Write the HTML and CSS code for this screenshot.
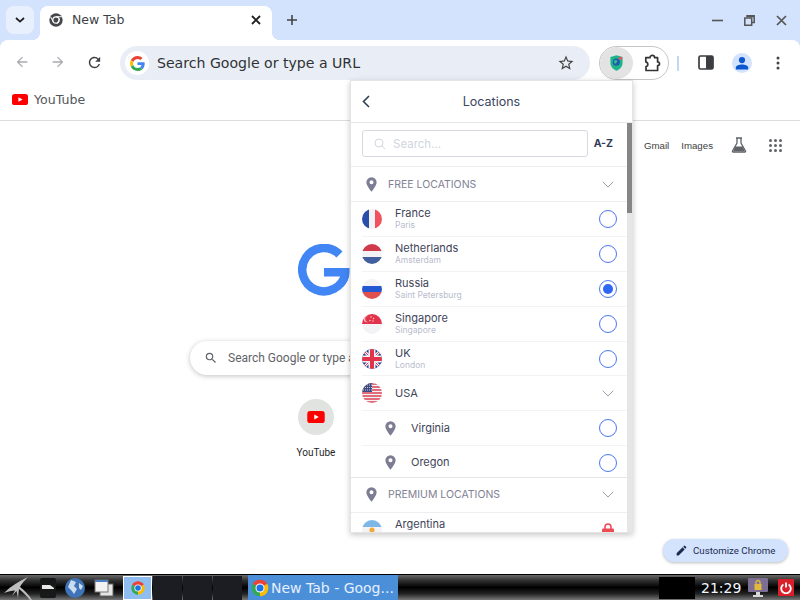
FILE: index.html
```html
<!DOCTYPE html>
<html lang="en">
<head>
  <meta charset="UTF-8" />
  <title>New Tab</title>
  <link rel="stylesheet" href="styles.css">
</head>
<body>
  <svg class="defs" xmlns="http://www.w3.org/2000/svg">
    <symbol id="chrome" viewBox="0 0 24 24">
      <path fill="#ea4335" d="M12 12 3.34 7A10 10 0 0 1 20.66 7Z"/>
      <path fill="#fbbc05" d="M12 12 20.66 7A10 10 0 0 1 12 22Z"/>
      <path fill="#34a853" d="M12 12 12 22A10 10 0 0 1 3.34 7Z"/>
      <circle cx="12" cy="12" r="5.4" fill="#fff"/>
      <circle cx="12" cy="12" r="4.2" fill="#1a73e8"/>
    </symbol>
    <symbol id="pin" viewBox="0 0 12 16">
      <path fill="#7c7c94" fill-rule="evenodd" d="M6 0a5.6 5.6 0 0 1 5.6 5.6C11.6 9.4 6 16 6 16S.4 9.4.4 5.6A5.6 5.6 0 0 1 6 0Zm0 3.4a2.2 2.2 0 1 0 0 4.4 2.2 2.2 0 0 0 0-4.4Z"/>
    </symbol>
    <symbol id="chev" viewBox="0 0 12 7">
      <path fill="none" stroke="#9a9cae" stroke-width="1" d="M.7.8 6 6 11.3.8"/>
    </symbol>
    <symbol id="yt" viewBox="0 0 16 11">
      <rect width="16" height="11" rx="2.6" fill="#f00"/>
      <path fill="#fff" d="M6.4 3.2 10.6 5.5 6.4 7.8Z"/>
    </symbol>
  </svg>

  <div class="tabstrip">
    <div class="tab-search">
      <svg width="10" height="6" viewBox="0 0 10 6"><path fill="none" stroke="#1f1f1f" stroke-width="1.8" d="M1 1l4 3.6L9 1"/></svg>
    </div>
    <div class="tab">
      <svg width="14" height="14" viewBox="0 0 24 24"><circle cx="12" cy="12" r="11.5" fill="#45474a"/><circle cx="12" cy="12" r="6.4" fill="#fff"/><circle cx="12" cy="12" r="4.4" fill="#45474a"/><path d="M12 5.6h10v1.5H12zM6.6 15.2 2 7l1.3-.8 4.6 8zM13 18l4.8-8.4 1.3.8L14.3 18.8z" fill="#fff"/></svg>
      <span class="tab-title">New Tab</span>
      <svg class="tab-x" width="10" height="10" viewBox="0 0 10 10"><path stroke="#1f1f1f" stroke-width="1.8" d="M1 1l8 8M9 1l-8 8"/></svg>
    </div>
    <svg class="new-tab" width="12" height="12" viewBox="0 0 12 12"><path stroke="#444" stroke-width="1.6" d="M6 1v10M1 6h10"/></svg>
    <div class="win-btns">
      <svg width="11" height="3" viewBox="0 0 11 3"><path stroke="#555" stroke-width="1.6" d="M0 1.5h11"/></svg>
      <svg width="11" height="11" viewBox="0 0 11 11"><path fill="none" stroke="#555" stroke-width="1.5" d="M3 2V.8h7.2v6.7H8M.8 3h6.9v7.2H.8z"/><path stroke="#555" stroke-width="1.5" d="M3 1.5h7"/></svg>
      <svg width="11" height="11" viewBox="0 0 11 11"><path stroke="#555" stroke-width="1.7" d="M1 1l9 9M10 1l-9 9"/></svg>
    </div>
  </div>

  <div class="toolbar">
    <svg class="nav" width="16" height="16" viewBox="0 0 24 24"><path fill="#a9abae" d="M20 11H7.83l5.59-5.59L12 4l-8 8 8 8 1.41-1.41L7.83 13H20v-2z"/></svg>
    <svg class="nav" width="16" height="16" viewBox="0 0 24 24"><path fill="#a9abae" d="M4 11h12.17l-5.59-5.59L12 4l8 8-8 8-1.41-1.41L16.17 13H4v-2z"/></svg>
    <svg class="nav" width="17" height="17" viewBox="0 0 24 24"><path fill="#3c3f43" d="M17.65 6.35A7.958 7.958 0 0 0 12 4c-4.42 0-7.99 3.58-7.99 8s3.57 8 7.99 8c3.73 0 6.84-2.55 7.73-6h-2.08A5.99 5.99 0 0 1 12 18c-3.31 0-6-2.69-6-6s2.69-6 6-6c1.66 0 3.14.69 4.22 1.78L13 11h7V4l-2.35 2.35z"/></svg>
    <div class="omnibox">
      <span class="g-badge">
        <svg width="15" height="15" viewBox="0 0 48 48">
          <path fill="#ea4335" d="M24 9.5c3.54 0 6.71 1.22 9.21 3.6l6.85-6.85C35.9 2.38 30.47 0 24 0 14.62 0 6.51 5.38 2.56 13.22l7.98 6.19C12.43 13.72 17.74 9.5 24 9.5z"/>
          <path fill="#4285f4" d="M46.98 24.55c0-1.57-.15-3.09-.38-4.55H24v9.02h12.94c-.58 2.96-2.26 5.48-4.78 7.18l7.73 6c4.51-4.18 7.09-10.36 7.09-17.65z"/>
          <path fill="#fbbc05" d="M10.53 28.59c-.48-1.45-.76-2.99-.76-4.59s.27-3.14.76-4.59l-7.98-6.19C.92 16.46 0 20.12 0 24c0 3.88.92 7.54 2.56 10.78l7.97-6.19z"/>
          <path fill="#34a853" d="M24 48c6.48 0 11.93-2.13 15.89-5.81l-7.73-6c-2.15 1.45-4.92 2.3-8.16 2.3-6.26 0-11.57-4.22-13.47-9.91l-7.98 6.19C6.51 42.62 14.62 48 24 48z"/>
        </svg>
      </span>
      <span class="omni-text">Search Google or type a URL</span>
      <svg class="star" width="18" height="18" viewBox="0 0 24 24"><path fill="#444" d="M22 9.24l-7.19-.62L12 2 9.19 8.63 2 9.24l5.46 4.73L5.82 21 12 17.27 18.18 21l-1.63-7.03L22 9.24zM12 15.4l-3.76 2.27 1-4.28-3.32-2.88 4.38-.38L12 6.1l1.71 4.04 4.38.38-3.32 2.88 1 4.28L12 15.4z"/></svg>
    </div>
    <div class="ext-group">
      <span class="ext-active">
        <svg width="13" height="16" viewBox="0 0 15 18">
          <path fill="#1fb58a" d="M7.5 0 14.5 2.2V9c0 4.2-3.2 7.4-7 9-3.8-1.6-7-4.8-7-9V2.2Z"/>
          <circle cx="7.3" cy="8" r="4.1" fill="#1d5fa8"/>
          <path fill="#37c0a0" d="M5 6.2 7.5 5.4 8.2 7.5 6.4 9.8 4.6 8.5Z"/>
          <circle cx="12" cy="3.6" r="2" fill="#e9546b"/>
        </svg>
      </span>
      <svg class="puzzle" width="17" height="18" viewBox="0 0 17 18"><path fill="none" stroke="#333" stroke-width="1.7" stroke-linejoin="round" d="M1.8 3.7H6a2.3 2.3 0 0 1 4.6 0h3v4.2a1.900 1.900 0 0 1 0 3.800v4.800H2V12.500a2 2 0 0 0 1.800-2.400A2.200 2.200 0 0 0 1.800 8Z"/></svg>
    </div>
    <span class="tb-sep"></span>
    <svg class="sidepanel" width="16" height="15" viewBox="0 0 16 15"><rect x="1" y="1" width="14" height="13" rx="1.5" fill="#fff" stroke="#3b3d40" stroke-width="1.7"/><path fill="#3b3d40" d="M8 1h6a1 1 0 0 1 1 1v11a1 1 0 0 1-1 1H8Z"/></svg>
    <span class="avatar">
      <svg width="14" height="14" viewBox="0 0 14 14"><circle cx="7" cy="4.1" r="3.1" fill="#0b57d0"/><path fill="#0b57d0" d="M.8 13.5V11.8C.8 9.8 4.2 8.6 7 8.6s6.2 1.200 6.200 3.200v1.700Z"/></svg>
    </span>
    <svg class="dots" width="4" height="14" viewBox="0 0 4 14"><circle cx="2" cy="2" r="1.5" fill="#444"/><circle cx="2" cy="7" r="1.5" fill="#444"/><circle cx="2" cy="12" r="1.5" fill="#444"/></svg>
  </div>

  <div class="bookmarks">
    <svg width="16" height="11"><use href="#yt"/></svg>
    <span>YouTube</span>
  </div>

  <div class="page">
    <div class="page-links">
      <span class="link-gmail">Gmail</span>
      <span class="link-images">Images</span>
      <svg class="flask" width="16" height="16" viewBox="0 0 16 16"><path fill="none" stroke="#5f6368" stroke-width="1.3" d="M5 1h6M6 1v5L1.5 14c-.3.6 0 1 .6 1h11.800c.6 0 .9-.4.600-1L10 6V1"/><path fill="#5f6368" d="M4.300 9.500h7.400l2 4.800H2.300Z"/></svg>
      <div class="apps">
        <i></i><i></i><i></i><i></i><i></i><i></i><i></i><i></i><i></i>
      </div>
    </div>
    <div class="column">
      <svg class="logo" width="52" height="52" viewBox="0 0 52 52">
        <path fill="none" stroke="#4285f4" stroke-width="8.5" d="M41.5 10.5A21.7 21.7 0 1 0 47.2 30"/>
        <path fill="#4285f4" d="M26 24h25.500c.5 8-1.500 14-6.500 19l-5.500-5.500c2.800-2.500 4-5 4.300-5H26Z"/>
      </svg>
      <div class="ntp-search">
        <svg width="14" height="14" viewBox="0 0 24 24"><path fill="#5f6368" d="M15.5 14h-.79l-.28-.27A6.471 6.471 0 0 0 16 9.5 6.5 6.5 0 1 0 9.500 16c1.610 0 3.090-.59 4.230-1.570l.27.28v.79l5 4.990L20.490 19l-4.990-5zm-6 0C7.010 14 5 11.990 5 9.500S7.010 5 9.500 5 14 7.010 14 9.500 11.990 14 9.500 14z"/></svg>
        <span>Search Google or type a URL</span>
      </div>
      <div class="tile">
        <span class="tile-icon"><svg width="18" height="12"><use href="#yt"/></svg></span>
        <span class="tile-label">YouTube</span>
      </div>
    </div>
    <div class="customize">
      <svg width="13" height="13" viewBox="0 0 24 24"><path fill="#1c2b4f" d="M3 17.25V21h3.75L17.81 9.94l-3.75-3.75L3 17.25zM20.71 7.04a.996.996 0 0 0 0-1.41l-2.34-2.34a.996.996 0 0 0-1.41 0l-1.83 1.83 3.75 3.75 1.83-1.83z"/></svg>
      <span>Customize Chrome</span>
    </div>
  </div>

  <div class="taskbar">
    <svg class="tb-dragon" width="30" height="24" viewBox="0 0 30 24"><path fill="#bdbdbd" d="M1 17C8 10 16 5 25 1 20 6 18 9 17 11 21 14 26 19 29 24L27 24C24 20 20 16 16 13L15 22 13.5 15 9 20 12 14.5C9 14.5 5 15.5 1 17Z"/></svg>
    <svg class="tb-folder" width="16" height="20" viewBox="0 0 16 20"><rect width="16" height="20" rx="2" fill="#17181a"/><path fill="#e8e8e8" d="M2 7h8l4 3v1H2Z"/></svg>
    <svg class="tb-globe" width="20" height="20" viewBox="0 0 20 20"><circle cx="10" cy="10" r="10" fill="#3f74b8"/><path fill="#c9dcf0" d="M6 2 11 4 9 8 12 11 9 16 6 12 3 9ZM14 5 18 8 16 12 14 10Z"/></svg>
    <svg class="tb-windows" width="20" height="18" viewBox="0 0 20 18"><rect x="6" y="5" width="13" height="12" fill="#e6e6e6" stroke="#666"/><rect x="1" y="1" width="13" height="12" fill="#f2f2f2" stroke="#777"/><path fill="#4c7fc2" d="M1 1h13v2H1z"/></svg>
    <div class="tb-launcher"><svg width="16" height="16"><use href="#chrome"/></svg></div>
    <div class="tb-slot"></div>
    <div class="tb-slot"></div>
    <div class="tb-slot"></div>
    <div class="tb-task">
      <svg width="20" height="20"><use href="#chrome"/></svg>
      <span>New Tab - Goog...</span>
    </div>
    <div class="tb-cpu"></div>
    <span class="tb-clock">21:29</span>
    <svg class="tb-lock" width="20" height="20" viewBox="0 0 20 20"><rect width="20" height="14" rx="1" fill="#7d6f93"/><path fill="#d8d8d8" d="M8 14h4v3h3v2H5v-2h3Z"/><rect x="6.5" y="6" width="7" height="6" fill="#e2b93d"/><path fill="none" stroke="#e2b93d" stroke-width="1.3" d="M8 6V4.5a2 2 0 0 1 4 0V6"/></svg>
    <div class="tb-power">
      <svg width="12" height="12" viewBox="0 0 12 12"><path fill="none" stroke="#fff" stroke-width="1.8" d="M3.4 2.5a4.800 4.800 0 1 0 5.200 0M6 .5v5"/></svg>
    </div>
  </div>

  <div class="popup">
    <div class="pop-head">
      <svg class="pop-back" width="8" height="13" viewBox="0 0 8 13"><path fill="none" stroke="#2f3f58" stroke-width="1.6" d="M7 1 1.5 6.5 7 12"/></svg>
      <span>Locations</span>
    </div>
    <div class="pop-scroll">
      <div class="pop-body">
        <div class="pop-search">
          <div class="search-field">
            <svg width="12" height="12" viewBox="0 0 12 12"><circle cx="5" cy="5" r="4" fill="none" stroke="#d4d6de" stroke-width="1"/><path stroke="#d4d6de" d="M8 8l3 3"/></svg>
            <span>Search...</span>
          </div>
          <span class="az">A-Z</span>
        </div>

        <div class="section">
          <svg class="sec-pin" width="11" height="15"><use href="#pin"/></svg>
          <span class="sec-title">FREE LOCATIONS</span>
          <svg class="chev" width="12" height="7"><use href="#chev"/></svg>
        </div>

        <div class="row">
          <svg class="flag" viewBox="0 0 20 20"><rect width="7" height="20" fill="#2a4fa8"/><rect x="7" width="6" height="20" fill="#f3f3f6"/><rect x="13" width="7" height="20" fill="#f0525f"/></svg>
          <div class="place"><span class="name">France</span><span class="city">Paris</span></div>
          <span class="radio"></span>
        </div>
        <div class="row">
          <svg class="flag" viewBox="0 0 20 20"><rect width="20" height="7" fill="#cf3b4a"/><rect y="7" width="20" height="6" fill="#f3f3f6"/><rect y="13" width="20" height="7" fill="#42609f"/></svg>
          <div class="place"><span class="name">Netherlands</span><span class="city">Amsterdam</span></div>
          <span class="radio"></span>
        </div>
        <div class="row">
          <svg class="flag" viewBox="0 0 20 20"><rect width="20" height="7" fill="#f3f3f6"/><rect y="7" width="20" height="6" fill="#2458d3"/><rect y="13" width="20" height="7" fill="#e0504d"/></svg>
          <div class="place"><span class="name">Russia</span><span class="city">Saint Petersburg</span></div>
          <span class="radio selected"></span>
        </div>
        <div class="row">
          <svg class="flag" viewBox="0 0 20 20"><rect width="20" height="10" fill="#e2334a"/><rect y="10" width="20" height="10" fill="#f3f3f6"/><circle cx="5" cy="5" r="3.2" fill="#f6c3c9"/><circle cx="6.2" cy="5" r="3" fill="#e2334a"/><circle cx="9" cy="3" r=".7" fill="#fbdde0"/><circle cx="11.5" cy="4.5" r=".7" fill="#fbdde0"/><circle cx="8" cy="6.5" r=".7" fill="#fbdde0"/><circle cx="11" cy="7" r=".7" fill="#fbdde0"/></svg>
          <div class="place"><span class="name">Singapore</span><span class="city">Singapore</span></div>
          <span class="radio"></span>
        </div>
        <div class="row">
          <svg class="flag" viewBox="0 0 20 20"><rect width="20" height="20" fill="#233a8f"/><path stroke="#f3f3f6" stroke-width="3" d="M0 0l20 20M20 0 0 20"/><path stroke="#e2334a" stroke-width="1" d="M0 0l20 20M20 0 0 20"/><path stroke="#f3f3f6" stroke-width="7" d="M10 0v20M0 10h20"/><path stroke="#e2334a" stroke-width="4" d="M10 0v20M0 10h20"/></svg>
          <div class="place"><span class="name">UK</span><span class="city">London</span></div>
          <span class="radio"></span>
        </div>
        <div class="row">
          <svg class="flag" viewBox="0 0 20 20"><rect width="20" height="20" fill="#f3f3f6"/><path stroke="#dc3f50" stroke-width="1.5" d="M0 1h20M0 4h20M0 7h20M0 10h20M0 13h20M0 16h20M0 19h20"/><rect width="10" height="9" fill="#3d4a80"/><path stroke="#c9cde0" stroke-width="1" stroke-dasharray="1 1" d="M1 2h9M1 4.500h9M1 7h9"/></svg>
          <div class="place"><span class="name">USA</span></div>
          <svg class="chev" width="12" height="7"><use href="#chev"/></svg>
        </div>
        <div class="row sub">
          <svg class="sub-pin" width="11" height="15"><use href="#pin"/></svg>
          <div class="place"><span class="name">Virginia</span></div>
          <span class="radio"></span>
        </div>
        <div class="row sub last">
          <svg class="sub-pin" width="11" height="15"><use href="#pin"/></svg>
          <div class="place"><span class="name">Oregon</span></div>
          <span class="radio"></span>
        </div>

        <div class="section">
          <svg class="sec-pin" width="11" height="15"><use href="#pin"/></svg>
          <span class="sec-title">PREMIUM LOCATIONS</span>
          <svg class="chev" width="12" height="7"><use href="#chev"/></svg>
        </div>

        <div class="row partial">
          <svg class="flag" viewBox="0 0 20 20"><rect width="20" height="7" fill="#7db7e8"/><rect y="7" width="20" height="6" fill="#f3f3f6"/><rect y="13" width="20" height="7" fill="#7db7e8"/><circle cx="10" cy="10" r="2.6" fill="#f2a93b"/></svg>
          <div class="place"><span class="name">Argentina</span></div>
          <svg class="lock" width="12" height="14" viewBox="0 0 12 14"><path fill="none" stroke="#ee4a55" stroke-width="1.6" d="M3 6V4a3 3 0 0 1 6 0v2"/><rect y="5.5" width="12" height="8.5" rx="1.2" fill="#ee4a55"/></svg>
        </div>
      </div>
      <div class="pop-track"><div class="pop-thumb"></div></div>
    </div>
  </div>
</body>
</html>
```

FILE: styles.css
```css
* {
  box-sizing: border-box;
}

html, body {
  margin: 0;
  padding: 0;
}

body {
  position: relative;
  width: 800px;
  height: 600px;
  overflow: hidden;
  display: flex;
  flex-direction: column;
  background: #d3e3fd;
  font-family: "DejaVu Sans", sans-serif;
}

.defs {
  display: none;
}

svg {
  flex: none;
  display: block;
}

/* tab strip */
.tabstrip {
  height: 40px;
  display: flex;
  align-items: flex-end;
  padding-left: 6px;
}

.tab-search {
  width: 28px;
  height: 28px;
  margin-bottom: 6px;
  border-radius: 8px;
  background: #e9f0fd;
  display: flex;
  align-items: center;
  justify-content: center;
}

.tab {
  position: relative;
  width: 232px;
  height: 34px;
  margin-left: 6px;
  padding: 0 11px 7px 9px;
  background: #fff;
  border-radius: 8px 8px 0 0;
  display: flex;
  align-items: center;
  gap: 9px;
}

.tab::before,
.tab::after {
  content: "";
  position: absolute;
  bottom: 0;
  width: 8px;
  height: 8px;
}

.tab::before {
  left: -8px;
  background: radial-gradient(circle at 0 0, transparent 8px, #fff 8px);
}

.tab::after {
  right: -8px;
  background: radial-gradient(circle at 100% 0, transparent 8px, #fff 8px);
}

.tab-title {
  flex: 1;
  font-size: 12.5px;
  color: #3c3f43;
}

.new-tab {
  margin: 0 0 14px 14px;
}

.win-btns {
  margin-left: auto;
  margin-bottom: 14px;
  padding-right: 13px;
  display: flex;
  align-items: center;
  gap: 21px;
}

/* toolbar */
.toolbar {
  height: 40px;
  background: #fff;
  border-radius: 8px 8px 0 0;
  display: flex;
  align-items: flex-end;
  padding-left: 14px;
}

.nav {
  margin: 0 20px 10px 0;
}

.nav:nth-child(3) {
  margin-right: 17px;
  margin-bottom: 9px;
}

.omnibox {
  width: 470px;
  height: 34px;
  border-radius: 17px;
  background: #e9eef6;
  display: flex;
  align-items: center;
  padding: 0 15px 0 5px;
}

.g-badge {
  width: 24px;
  height: 24px;
  border-radius: 50%;
  background: #fff;
  display: flex;
  align-items: center;
  justify-content: center;
}

.omni-text {
  flex: 1;
  margin-left: 8px;
  font-size: 14.1px;
  color: #2f3134;
}

.ext-group {
  width: 70px;
  height: 34px;
  margin-left: 9px;
  border: 1px solid #c4c7c5;
  border-radius: 17px;
  display: flex;
  align-items: center;
}

.ext-active {
  width: 33px;
  height: 32px;
  border-radius: 50%;
  background: #e3e3e3;
  display: flex;
  align-items: center;
  justify-content: center;
}

.puzzle {
  margin-left: 11px;
}

.tb-sep {
  width: 2px;
  height: 15px;
  margin: 0 0 9px 8px;
  background: #c2d7f5;
}

.sidepanel {
  margin: 0 0 10px 19px;
}

.avatar {
  width: 20px;
  height: 20px;
  margin: 0 0 7px 18px;
  border-radius: 50%;
  background: #d3e3fd;
  display: flex;
  align-items: flex-end;
  justify-content: center;
  padding-bottom: 3px;
}

.dots {
  margin: 0 0 10px 24px;
}

/* bookmarks */
.bookmarks {
  height: 41px;
  background: #fff;
  border-bottom: 1px solid #dcdcdc;
  display: flex;
  align-items: center;
  gap: 6px;
  padding: 0 0 2px 12px;
  font-size: 12.6px;
  color: #54575b;
}

/* new tab page */
.page {
  flex: 1;
  background: #fff;
  display: flex;
  flex-direction: column;
}

.page-links {
  height: 34px;
  padding: 14px 18px 0 0;
  display: flex;
  justify-content: flex-end;
  align-items: center;
  font-family: "Liberation Sans", sans-serif;
  font-size: 9.7px;
  color: #3c4043;
}

.link-images {
  margin-left: 12px;
}

.flask {
  margin-left: 18px;
}

.apps {
  margin-left: 22px;
  display: grid;
  grid-template-columns: repeat(3, 3px);
  gap: 2px;
}

.apps i {
  width: 3px;
  height: 3px;
  border-radius: 50%;
  background: #5f6368;
}

.column {
  width: 420px;
  margin: 89px 0 0 190px;
  display: flex;
  flex-direction: column;
}

.logo {
  margin-left: 108px;
}

.ntp-search {
  height: 34px;
  margin-top: 45px;
  padding-left: 14px;
  border-radius: 17px;
  background: #fff;
  box-shadow: 0 1px 5px rgba(32,33,36,0.28);
  display: flex;
  align-items: center;
  gap: 10px;
  font-family: Roboto, sans-serif;
  font-size: 12px;
  color: #5f6368;
}

.tile {
  width: 72px;
  margin: 24px 0 0 90px;
  display: flex;
  flex-direction: column;
  align-items: center;
  gap: 12px;
}

.tile-icon {
  width: 36px;
  height: 36px;
  border-radius: 50%;
  background: #e1e3e1;
  display: flex;
  align-items: center;
  justify-content: center;
}

.tile-label {
  font-family: Roboto, sans-serif;
  font-size: 10px;
  line-height: 12px;
  color: #1f1f1f;
}

.customize {
  align-self: flex-end;
  width: 125px;
  height: 23px;
  margin: auto 12px 12px 0;
  padding-left: 12px;
  border-radius: 12px;
  background: #d3e3fd;
  box-shadow: 0 1px 3px rgba(60,64,67,0.35);
  display: flex;
  align-items: center;
  gap: 5px;
  font-family: Roboto, sans-serif;
  font-size: 9.7px;
  color: #1c2b4f;
}

/* panel at the bottom */
.taskbar {
  height: 26px;
  border-top: 1px solid #000;
  background: linear-gradient(#6a6a6a 0%, #303030 22%, #000 50%, #222 75%, #777 100%);
  display: flex;
  align-items: center;
}

.tb-dragon {
  margin-left: 3px;
}

.tb-folder {
  margin-left: 7px;
}

.tb-globe {
  margin-left: 9px;
}

.tb-windows {
  margin-left: 9px;
}

.tb-launcher {
  width: 29px;
  height: 24px;
  margin-left: 9px;
  border: 1px solid #fff;
  background: #8fbdf0;
  display: flex;
  align-items: center;
  justify-content: center;
}

.tb-slot {
  width: 29px;
  height: 24px;
  margin-left: 1px;
  background: #1b1d22;
}

.tb-task {
  width: 150px;
  height: 25px;
  margin-left: 6px;
  padding-left: 2px;
  background: #4a8fd8;
  display: flex;
  align-items: center;
  gap: 1px;
  font-size: 14px;
  color: #e6f0ff;
  white-space: nowrap;
}

.tb-cpu {
  width: 36px;
  height: 22px;
  margin-left: 261px;
  background: #000;
}

.tb-clock {
  margin-left: 6px;
  font-size: 14px;
  color: #f2f6ff;
}

.tb-lock {
  margin-left: 7px;
}

.tb-power {
  width: 16px;
  height: 17px;
  margin-left: 10px;
  background: #d9202a;
  display: flex;
  align-items: center;
  justify-content: center;
}

/* locations popup */
.popup {
  position: absolute;
  top: 80px;
  left: 350px;
  width: 283px;
  height: 453px;
  background: #fff;
  border: 1px solid #e4e4e4;
  box-shadow: 0 2px 6px rgba(0,0,0,0.22);
  display: flex;
  flex-direction: column;
  font-family: Inter, sans-serif;
}

.pop-head {
  position: relative;
  height: 42px;
  flex: none;
  border-bottom: 1px solid #e6e7ea;
  display: flex;
  align-items: center;
  justify-content: center;
  font-size: 12.5px;
  color: #3a4560;
}

.pop-back {
  position: absolute;
  left: 11px;
  top: 14px;
}

.pop-scroll {
  flex: 1;
  min-height: 0;
  display: flex;
  overflow: hidden;
}

.pop-body {
  flex: 1;
  min-width: 0;
}

.pop-track {
  width: 5px;
  flex: none;
  background: #e6e6e6;
}

.pop-thumb {
  width: 5px;
  height: 90px;
  background: #858585;
}

.pop-search {
  height: 44px;
  border-bottom: 1px solid #eceef1;
  display: flex;
  align-items: center;
  padding: 0 14px 2px 11px;
}

.search-field {
  width: 226px;
  height: 27px;
  padding-left: 11px;
  border: 1px solid #d8d9e0;
  border-radius: 3px;
  display: flex;
  align-items: center;
  gap: 7px;
  font-size: 11.5px;
  color: #d2d5de;
}

.az {
  margin-left: auto;
  font-size: 10.5px;
  font-weight: 700;
  color: #2f3c58;
}

.section {
  height: 35px;
  border-bottom: 1px solid #eceef1;
  display: flex;
  align-items: center;
  padding: 0 10px 0 15px;
}

.sec-title {
  flex: 1;
  margin-left: 11px;
  font-size: 10.5px;
  color: #7f8194;
}

.row {
  height: 34.9px;
  margin-left: 11px;
  border-bottom: 1px solid #f2f3f5;
  display: flex;
  align-items: center;
  padding-right: 10px;
}

.row.sub {
  padding-left: 23px;
}

.row.last {
  height: 31.7px;
  margin-left: 0;
  padding-left: 34px;
  padding-top: 2px;
  border-bottom: 1px solid #e6e7ea;
}

.row.partial .place {
  padding-bottom: 10px;
}

.flag {
  width: 20px;
  height: 20px;
  border-radius: 50%;
}

.place {
  flex: 1;
  margin-left: 13px;
  display: flex;
  flex-direction: column;
}

.sub .place {
  margin-left: 15px;
}

.name {
  font-size: 11px;
  line-height: 13px;
  color: #414459;
}

.city {
  font-size: 8.5px;
  line-height: 11px;
  color: #b9bccd;
}

.radio {
  width: 18px;
  height: 18px;
  border: 1.5px solid #4a77f2;
  border-radius: 50%;
  display: flex;
  align-items: center;
  justify-content: center;
}

.radio.selected::before {
  content: "";
  width: 10px;
  height: 10px;
  border-radius: 50%;
  background: #2f66f3;
}

.chev {
  margin-right: 3px;
}

.lock {
  margin: 0 3px 0 0;
}
```
